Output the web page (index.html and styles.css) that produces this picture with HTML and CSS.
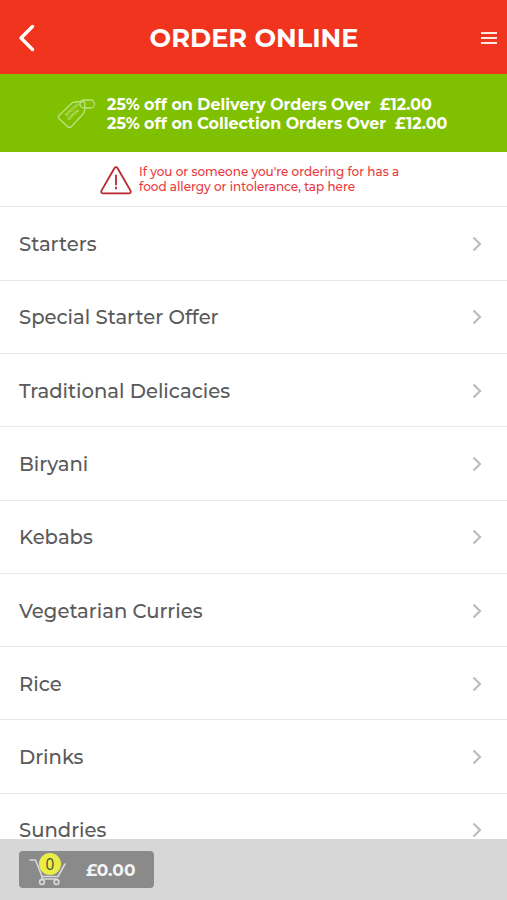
FILE: index.html
```
<!DOCTYPE html>
<html lang="en">

<head>
    <meta charset="UTF-8">
    <meta name="viewport" content="width=device-width, initial-scale=1.0">
    <title>Order Online</title>
    <link rel="stylesheet" href="styles.css">
</head>

<body>
    <header class="header">
        <svg class="back" viewBox="0 0 17 28">
            <path d="M14.500 2.500L3 14l11.500 11.500" />
        </svg>
        <h1>ORDER ONLINE</h1>
        <svg class="menu-icon" viewBox="0 0 16 14">
            <path d="M0 2h16M0 7h16M0 12h16" />
        </svg>
    </header>

    <div class="offers">
        <svg class="tag" viewBox="0 0 40 32">
            <path d="M2 17.500L14.500 5.500Q16 4 18 4L26.500 3.500Q28 3.500 28 5.500L27.500 13Q27.500 14.500 26 16L14.500 28.500Q12.500 30.500 10.500 28.500L2 20.500Q.500 19 2 17.500z" />
            <rect x="23" y="2" width="14.500" height="8" rx="4" />
            <text transform="translate(9.500 18.500) rotate(-43)">SPECIAL</text>
            <text transform="translate(12 22.500) rotate(-43)">OFFER</text>
        </svg>
        <div class="offer-text">
            <p>25% off on Delivery Orders Over&nbsp; £12.00</p>
            <p>25% off on Collection Orders Over&nbsp; £12.00</p>
        </div>
    </div>

    <div class="allergy">
        <svg class="warning" viewBox="0 0 32 29">
            <path d="M14.400 2.200Q16 .200 17.600 2.200L30.500 24.600Q31.500 27.200 29 27.300L3 27.300Q.500 27.200 1.500 24.600z" />
            <path d="M16 9.500v9M16 21.500v1" />
        </svg>
        <div class="allergy-text">
            <p>If you or someone you're ordering for has a</p>
            <p>food allergy or intolerance, tap here</p>
        </div>
    </div>

    <ul class="menu">
        <li><span>Starters</span><svg class="chevron" viewBox="0 0 10 16"><path d="M1.500 1.500L8 8l-6.500 6.500" /></svg></li>
        <li><span>Special Starter Offer</span><svg class="chevron" viewBox="0 0 10 16"><path d="M1.500 1.500L8 8l-6.500 6.500" /></svg></li>
        <li><span>Traditional Delicacies</span><svg class="chevron" viewBox="0 0 10 16"><path d="M1.500 1.500L8 8l-6.500 6.500" /></svg></li>
        <li><span>Biryani</span><svg class="chevron" viewBox="0 0 10 16"><path d="M1.500 1.500L8 8l-6.500 6.500" /></svg></li>
        <li><span>Kebabs</span><svg class="chevron" viewBox="0 0 10 16"><path d="M1.500 1.500L8 8l-6.500 6.500" /></svg></li>
        <li><span>Vegetarian Curries</span><svg class="chevron" viewBox="0 0 10 16"><path d="M1.500 1.500L8 8l-6.500 6.500" /></svg></li>
        <li><span>Rice</span><svg class="chevron" viewBox="0 0 10 16"><path d="M1.500 1.500L8 8l-6.500 6.500" /></svg></li>
        <li><span>Drinks</span><svg class="chevron" viewBox="0 0 10 16"><path d="M1.500 1.500L8 8l-6.500 6.500" /></svg></li>
        <li><span>Sundries</span><svg class="chevron" viewBox="0 0 10 16"><path d="M1.500 1.500L8 8l-6.500 6.500" /></svg></li>
    </ul>

    <footer class="footer">
        <div class="basket">
            <div class="cart">
                <svg viewBox="0 0 38 28">
                    <path d="M1 2h5.500L13 18.500h16L36 6M13 18.500v2.500h15" />
                    <circle cx="13" cy="24" r="2.400" />
                    <circle cx="27.500" cy="24" r="2.400" />
                </svg>
                <span class="count">0</span>
            </div>
            <span class="total">£0.00</span>
        </div>
    </footer>
</body>

</html>
```
FILE: styles.css
```
* {
    box-sizing: border-box;
}

body {
    display: flex;
    flex-direction: column;
    height: 900px;
    margin: 0;
    overflow: hidden;
    font-family: Montserrat, Inter, sans-serif;
    background-color: #fff;
    color: #5a5a5a;
}

h1,
p,
ul {
    margin: 0;
    padding: 0;
}

svg {
    display: block;
    fill: none;
    stroke-linecap: round;
    stroke-linejoin: round;
}

.header {
    display: flex;
    flex-shrink: 0;
    align-items: center;
    height: 74px;
    padding: 2px 10px 0 18px;
    background-color: #f0341e;
    color: #fff;
}

.header h1 {
    flex: 1;
    padding-right: 8px;
    font-size: 25.6px;
    line-height: 32px;
    text-align: center;
}

.back {
    width: 17px;
    height: 28px;
    stroke: #fff;
    stroke-width: 3.4;
}

.menu-icon {
    width: 16px;
    height: 14px;
    stroke: #ffe9e4;
    stroke-width: 2;
    stroke-linecap: butt;
}

.offers {
    display: flex;
    flex-shrink: 0;
    align-items: center;
    height: 78px;
    padding: 1px 0 0 57px;
    background-color: #7fc000;
    color: #fff;
}

.tag {
    width: 40px;
    height: 32px;
    margin-right: 10px;
    stroke: #c0e180;
    stroke-width: 1.3;
}

.tag text {
    fill: #c0e180;
    stroke: none;
    font-size: 4px;
    font-weight: 700;
}

.offer-text {
    font-size: 15.9px;
    font-weight: 700;
    line-height: 19px;
    white-space: nowrap;
}

.allergy {
    display: flex;
    flex-shrink: 0;
    height: 55.4px;
    padding: 13px 0 0 100px;
    border-bottom: 1px solid #e8e8e8;
    color: #e9383c;
}

.warning {
    width: 32px;
    height: 29px;
    margin: 1px 7px 0 0;
    stroke: #b9272b;
    stroke-width: 1.8;
}

.allergy-text {
    font-size: 12px;
    font-weight: 500;
    line-height: 14.5px;
    white-space: nowrap;
}

.menu {
    flex: 1;
    min-height: 0;
    overflow: hidden;
    list-style-type: none;
}

.menu li {
    display: flex;
    align-items: center;
    justify-content: space-between;
    height: 73.3px;
    padding: 1px 25px 0 19px;
    border-bottom: 1px solid #e8e8e8;
    font-size: 19.6px;
    font-weight: 500;
}

.chevron {
    width: 10px;
    height: 16px;
    stroke: #bdbdbd;
    stroke-width: 2.2;
    stroke-linecap: butt;
    stroke-linejoin: miter;
}

.footer {
    flex-shrink: 0;
    height: 61px;
    padding: 12px 19px;
    background-color: #d7d7d7;
}

.basket {
    display: flex;
    align-items: center;
    width: 135px;
    height: 37px;
    padding-left: 10px;
    border-radius: 4px;
    background-color: #8a8a8a;
    color: #f4f4f4;
}

.cart {
    position: relative;
    width: 38px;
    height: 24px;
    margin-right: 19px;
}

.cart svg {
    width: 38px;
    height: 28px;
    stroke: #d8d8d8;
    stroke-width: 1.6;
}

.count {
    position: absolute;
    top: -5px;
    left: 10px;
    width: 22px;
    height: 22px;
    border-radius: 50%;
    background-color: #eaed45;
    color: #4d4d30;
    font-family: "Open Sans", sans-serif;
    font-size: 15.5px;
    line-height: 22px;
    text-align: center;
}

.total {
    font-size: 17px;
    font-weight: 700;
}
```
